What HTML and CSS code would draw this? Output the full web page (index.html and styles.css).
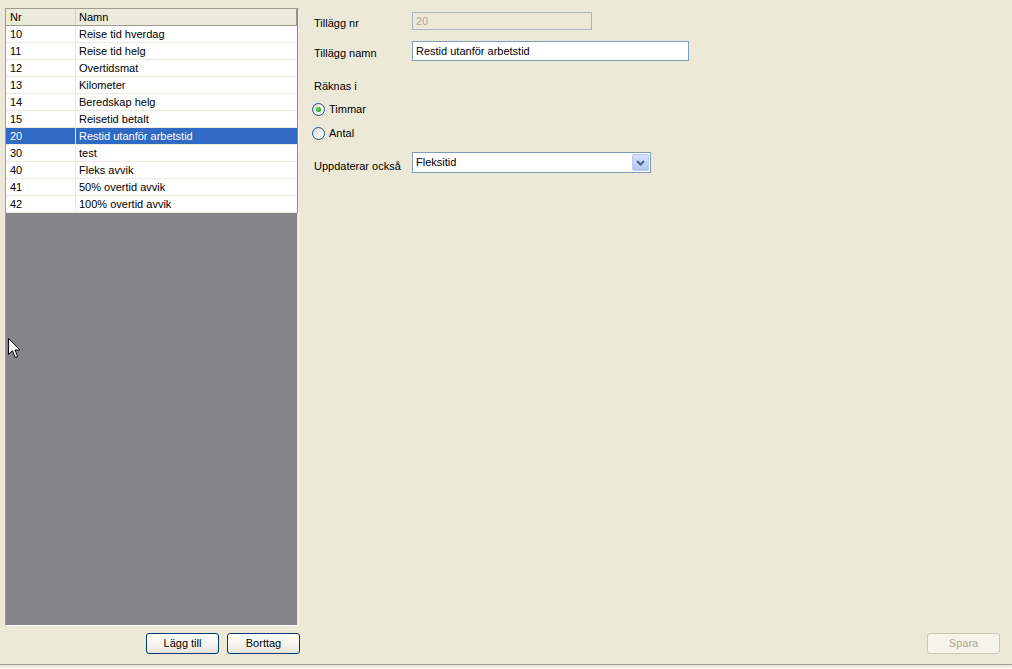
FILE: index.html
```html
<!DOCTYPE html>
<html>
<head>
<meta charset="utf-8">
<title>Tillägg</title>
<link rel="stylesheet" href="styles.css">
</head>
<body>
<div class="app">
  <div class="main">
    <div class="left">
      <div class="list">
        <div class="row head">
          <div class="c1">Nr</div>
          <div class="c2">Namn</div>
        </div>
        <div class="row"><div class="c1">10</div><div class="c2">Reise tid hverdag</div></div>
        <div class="row"><div class="c1">11</div><div class="c2">Reise tid helg</div></div>
        <div class="row"><div class="c1">12</div><div class="c2">Overtidsmat</div></div>
        <div class="row"><div class="c1">13</div><div class="c2">Kilometer</div></div>
        <div class="row"><div class="c1">14</div><div class="c2">Beredskap helg</div></div>
        <div class="row"><div class="c1">15</div><div class="c2">Reisetid betalt</div></div>
        <div class="row sel"><div class="c1">20</div><div class="c2">Restid utanför arbetstid</div></div>
        <div class="row"><div class="c1">30</div><div class="c2">test</div></div>
        <div class="row"><div class="c1">40</div><div class="c2">Fleks avvik</div></div>
        <div class="row"><div class="c1">41</div><div class="c2">50% overtid avvik</div></div>
        <div class="row"><div class="c1">42</div><div class="c2">100% overtid avvik</div></div>
        <div class="empty"></div>
      </div>
      <div class="btnrow">
        <div class="btn">Lägg till</div>
        <div class="btn">Borttag</div>
      </div>
    </div>
    <div class="right">
      <div class="form">
        <div class="frow r1">
          <div class="label">Tillägg nr</div>
          <div class="input disabled w180">20</div>
        </div>
        <div class="frow r2">
          <div class="label">Tillägg namn</div>
          <div class="input w277">Restid utanför arbetstid</div>
        </div>
        <div class="plain r3">Räknas i</div>
        <div class="radio r4"><span class="dot checked"></span><span>Timmar</span></div>
        <div class="radio r5"><span class="dot"></span><span>Antal</span></div>
        <div class="frow r6">
          <div class="label">Uppdaterar också</div>
          <div class="select">
            <span class="seltext">Fleksitid</span>
            <span class="drop"><svg width="9" height="6" viewBox="0 0 9 6"><path d="M1 1 L4.5 4.5 L8 1" fill="none" stroke="#4D6185" stroke-width="2"/></svg></span>
          </div>
        </div>
      </div>
      <div class="savebar">
        <div class="btn off">Spara</div>
      </div>
    </div>
  </div>
  <div class="status"></div>
  <svg class="cursor" width="13" height="21" viewBox="0 0 13 21"><path d="M0.5 0.5 L0.5 16.5 L4.5 12.8 L7.2 19.5 L9.6 18.5 L7 12 L12 12 Z" fill="#fff" stroke="#000" stroke-width="1" stroke-linejoin="miter"/></svg>
</div>
</body>
</html>
```
FILE: styles.css
```css
html, body {
  margin: 0;
  padding: 0;
}
body {
  background: #ECE9D8;
  font-family: "Liberation Sans", Arial, sans-serif;
  font-size: 11px;
  color: #000;
  width: 1012px;
  height: 669px;
  overflow: hidden;
}
.app {
  position: relative;
  display: flex;
  flex-direction: column;
  height: 669px;
}
.main {
  display: flex;
  height: 665px;
}
.left {
  width: 300px;
  display: flex;
  flex-direction: column;
  padding-top: 8px;
  box-sizing: border-box;
}
.list {
  margin-left: 5px;
  width: 294px;
  flex: 1;
  box-sizing: border-box;
  border: 1px solid;
  border-color: #A09D8F #F7F6EF #FFFFFF #A09D8F;
  display: flex;
  flex-direction: column;
  background: #858489;
}
.row {
  display: flex;
  height: 17px;
  box-sizing: border-box;
  background: #fff;
  border-bottom: 1px solid #EEEADD;
  line-height: 16px;
  margin-right: 1px;
  white-space: nowrap;
}
.row .c1 {
  width: 70px;
  box-sizing: border-box;
  padding-left: 4px;
  border-right: 1px solid #EEEADD;
}
.row .c2 {
  flex: 1;
  padding-left: 3px;
}
.row.head {
  background: #EBEADB;
  border-bottom: 1px solid #9E9B8C;
  border-right: 1px solid #9E9B8C;
  line-height: 16px;
}
.row.head .c1 {
  border-right: 1px solid #D6D2C2;
}
.row.sel {
  background: #316AC5;
  color: #fff;
}
.row.sel .c1 {
  border-right-color: #E6E6E6;
}
.empty {
  flex: 1;
  background: #858489;
  border-right: 1px solid #E5E2D5;
}
.btnrow {
  display: flex;
  justify-content: flex-end;
  gap: 8px;
  margin-top: 7px;
  margin-bottom: 10px;
}
.btn {
  width: 73px;
  height: 21px;
  box-sizing: border-box;
  border: 1px solid #003C74;
  border-radius: 3px;
  background: linear-gradient(#FFFFFF 0%, #F4F3EE 60%, #E6E3D8 100%);
  text-align: center;
  line-height: 19px;
}
.btn.off {
  border-color: #C9C7BA;
  background: #F5F4EA;
  color: #ACA899;
}
.right {
  flex: 1;
  display: flex;
  flex-direction: column;
  padding-left: 14px;
  padding-right: 12px;
}
.form {
  flex: 1;
  display: flex;
  flex-direction: column;
  padding-top: 12px;
}
.frow {
  display: flex;
  align-items: flex-start;
}
.label {
  width: 98px;
  padding-top: 4px;
  line-height: 14px;
}
.input {
  height: 18px;
  box-sizing: border-box;
  border: 1px solid #7F9DB9;
  background: #fff;
  padding-left: 3px;
  line-height: 16px;
}
.input.disabled {
  background: #ECE9D8;
  border-color: #A7B6C6;
  color: #ACA899;
}
.w180 { width: 180px; }
.w277 { width: 277px; height: 20px; line-height: 18px; }
.r2 { margin-top: 11px; }
.r2 .label { padding-top: 5px; }
.plain {
  line-height: 14px;
}
.r3 { margin-top: 18px; }
.radio {
  display: flex;
  align-items: center;
  height: 14px;
  gap: 4px;
  margin-left: -2px;
}
.r4 { margin-top: 9px; }
.r5 { margin-top: 10px; }
.dot {
  width: 13px;
  height: 13px;
  box-sizing: border-box;
  border: 1px solid #1C5180;
  border-radius: 50%;
  background: linear-gradient(135deg, #DCDCD7 0%, #F4F4F1 60%, #FFFFFF 100%);
  display: flex;
  align-items: center;
  justify-content: center;
}
.dot.checked::after {
  content: "";
  width: 5px;
  height: 5px;
  border-radius: 50%;
  background: radial-gradient(circle at 40% 40%, #5FE05B 0%, #21A121 70%);
}
.r6 { margin-top: 12px; }
.r6 .label { padding-top: 7px; }
.select {
  width: 239px;
  height: 21px;
  box-sizing: border-box;
  border: 1px solid #7F9DB9;
  background: #fff;
  display: flex;
  align-items: center;
  justify-content: space-between;
  padding: 1px;
}
.seltext {
  padding-left: 2px;
  line-height: 17px;
  align-self: flex-start;
}
.drop {
  width: 17px;
  height: 17px;
  box-sizing: border-box;
  border: 1px solid #B7C9F4;
  border-radius: 2px;
  background: linear-gradient(#D6E2FC 0%, #C1D3FB 50%, #B2C6F5 100%);
  display: flex;
  align-items: center;
  justify-content: center;
}
.savebar {
  display: flex;
  justify-content: flex-end;
  margin-bottom: 10px;
}
.status {
  height: 4px;
  border-top: 1px solid #A3A194;
  background: linear-gradient(#E4E2D8, #F7F6F1);
}
.cursor {
  position: absolute;
  left: 8px;
  top: 338px;
}
```
